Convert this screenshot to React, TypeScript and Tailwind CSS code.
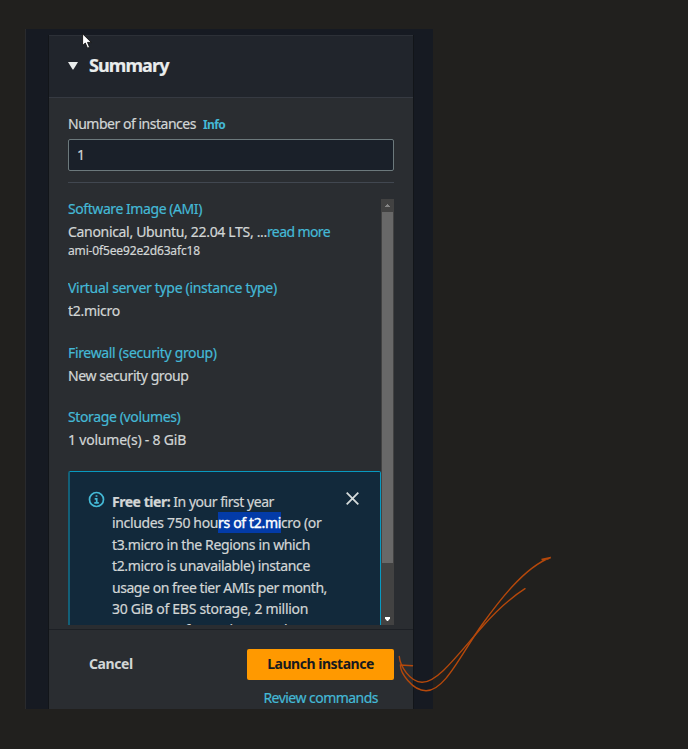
import React from "react";

type DetailProps = { label: string; labelClass: string; className: string; children: React.ReactNode };

function Detail({ label, labelClass, className, children }: DetailProps) {
  return (
    <div className={className}>
      <div className={`h-[23px] leading-5 text-[#44b9d6] ${labelClass}`}>{label}</div>
      {children}
    </div>
  );
}

function Header() {
  return (
    <header className="flex h-[63px] shrink-0 items-center border-t border-b border-t-[#2c3037] border-b-[#363a42] bg-[#21252c] pl-[19px]">
      <svg width="10" height="8" viewBox="0 0 10 8" className="mt-[-1px]">
        <path d="M0 0H10L5.4 7.6H4.6Z" fill="#eaeded" />
      </svg>
      <h2 className="ml-[11px] pb-1 text-[18px] leading-6 font-bold tracking-[-0.9px] text-[#eaeded]">Summary</h2>
    </header>
  );
}

function Scrollbar() {
  return (
    <div className="flex w-[13px] shrink-0 flex-col bg-[#424242]">
      <div className="flex h-[13px] items-center justify-center">
        <svg width="5" height="3" viewBox="0 0 5 3"><path d="M0 3V2H1V1H2V0H3V1H4V2H5V3Z" fill="#858585" /></svg>
      </div>
      <div className="mx-px h-[351px] bg-[#686868]" />
      <div className="mt-auto flex h-[13px] items-center justify-center">
        <svg width="5" height="4" viewBox="0 0 5 4"><path d="M0 0H5V1.5L3 4H2L0 1.5Z" fill="#fff" /></svg>
      </div>
    </div>
  );
}

function FreeTier() {
  return (
    <div className="mt-[21px] flex h-[200px] shrink-0 rounded-t-[2px] border border-l-2 border-[#0899c0] border-l-[#136078] bg-[#12293b] pl-[18px]">
      <svg className="mt-[19px] shrink-0" width="17" height="17" viewBox="0 0 17 17" fill="none" stroke="#44b9d6">
        <circle cx="8.5" cy="8.5" r="7" strokeWidth="1.7" />
        <path d="M7.600 5H9.4M6.7 7.9H8.7V11.8M6.3 11.8H10.8" strokeWidth="1.7" />
      </svg>
      <p className="ml-[7px] pt-[19px] text-[14px] leading-[21.4px] whitespace-nowrap text-[#d2d6d6]">
        <span className="block tracking-[-0.47px]"><b>Free tier:</b> In your first year</span>
        <span className="block tracking-[-0.34px]">
          includes 750 hou<mark className="inline-block h-[21px] bg-[#033ba8] align-top text-white [-webkit-text-stroke:0.4px]">rs of t2.mi</mark>cro (or
        </span>
        <span className="block tracking-[-0.37px]">t3.micro in the Regions in which</span>
        <span className="block tracking-[-0.37px]">t2.micro is unavailable) instance</span>
        <span className="block tracking-[-0.45px]">usage on free tier AMIs per month,</span>
        <span className="block tracking-[-0.28px]">30 GiB of EBS storage, 2 million</span>
        <span className="block tracking-[-0.4px]">I/Os, 1 GB of snapshots, and</span>
      </p>
      <svg className="mt-[20px] mr-[21.5px] ml-auto shrink-0" width="13" height="13" viewBox="0 0 13 13" stroke="#d5dbdb" strokeWidth="1.8">
        <path d="M.7 .7L12.3 12.3M12.3 .7L.7 12.3" />
      </svg>
    </div>
  );
}

function Annotation() {
  return (
    <svg className="pointer-events-none absolute top-0 left-0" width="688" height="749" viewBox="0 0 688 749" fill="none" stroke="#b5480b" strokeWidth="1.4" strokeLinecap="round">
      <path d="M399.3 656.5C400 666 410 682 422 682.3C438 682.5 459 653 483 626C500 607 512 597 525 588.7" />
      <path d="M412.5 665.7L400.5 665C400 672 412 690.7 426 690.7C445 691 461 654 482.500 624C497 604 524 567 550.800 557.5L541.500 559.500L548 559" />
    </svg>
  );
}

export default function App() {
  return (
    <div className="relative h-[749px] w-[688px] overflow-hidden bg-[#21201e] pt-[29px] pl-[25px] font-['Noto_Sans','Open_Sans',sans-serif] text-[14px] text-[#d2d6d6] [-webkit-text-stroke:0.2px]">
      <main className="flex h-[680px] w-[408px] border-l border-[#292a2d] bg-[#161a22] pt-[6px] pr-5 pl-[22px]">
        <section className="flex w-[366px] flex-col border-x border-[#121519] bg-[#2a2d31]">
          <Header />
          <div className="flex h-[531px] flex-col px-[19px] pt-4">
            <label className="flex h-[25px] items-start leading-5 whitespace-nowrap">
              <span className="tracking-[-0.48px]">Number of instances</span>
              <a className="ml-[7px] pt-px text-[12px] font-bold tracking-[-0.6px] text-[#44b9d6] [-webkit-text-stroke:0px]">Info</a>
            </label>
            <div className="flex h-8 shrink-0 items-center rounded-[2px] border border-[#6c797c] bg-[#1a2029] pl-2 leading-5">1</div>
            <div className="mt-[11px] h-px shrink-0 bg-[#414750]" />
            <div className="mt-4 flex h-[426px] shrink-0 overflow-hidden">
              <div className="flex w-[313px] shrink-0 flex-col overflow-hidden whitespace-nowrap">
                <Detail label="Software Image (AMI)" labelClass="tracking-[-0.43px]" className="h-[79px] shrink-0">
                  <div className="h-[21px] leading-5 tracking-[-0.32px]">Canonical, Ubuntu, 22.04 LTS, ...<a className="tracking-[-0.6px] text-[#44b9d6]">read more</a></div>
                  <div className="h-4 text-[12px] leading-4 tracking-[-0.15px]">ami-0f5ee92e2d63afc18</div>
                </Detail>
                <Detail label="Virtual server type (instance type)" labelClass="tracking-[-0.31px]" className="h-[65px] shrink-0">
                  <div className="leading-5 tracking-[-0.3px]">t2.micro</div>
                </Detail>
                <Detail label="Firewall (security group)" labelClass="tracking-[-0.34px]" className="h-[64px] shrink-0">
                  <div className="leading-5 tracking-[-0.42px]">New security group</div>
                </Detail>
                <Detail label="Storage (volumes)" labelClass="tracking-[-0.37px]" className="h-[43px] shrink-0">
                  <div className="leading-5 tracking-[-0.2px]">1 volume(s) - 8 GiB</div>
                </Detail>
                <FreeTier />
              </div>
              <Scrollbar />
            </div>
          </div>
          <footer className="flex h-[80px] flex-col border-t border-[#1d2025] pr-[19px] pl-10 [-webkit-text-stroke:0px]">
            <div className="mt-[19px] flex h-[31px] items-center justify-between">
              <button className="pb-0.5 font-bold tracking-[-0.4px]">Cancel</button>
              <button className="h-[31px] w-[147px] rounded-[2px] bg-[#ff9900] pb-0.5 font-bold tracking-[-0.48px] whitespace-nowrap text-[#16191f]">Launch instance</button>
            </div>
            <a className="mt-2 mr-4 self-end leading-5 tracking-[-0.53px] text-[#44b9d6] [-webkit-text-stroke:0.2px]">Review commands</a>
          </footer>
        </section>
      </main>
      <svg className="absolute top-[33px] left-[82px]" width="10" height="16" viewBox="0 0 10 16">
        <path d="M.6 .8V12.500L3.300 10L5.500 15.200L7.600 14.300L5.500 9.400H9.300Z" fill="#fff" stroke="#111" strokeWidth="0.9" />
      </svg>
      <Annotation />
    </div>
  );
}
